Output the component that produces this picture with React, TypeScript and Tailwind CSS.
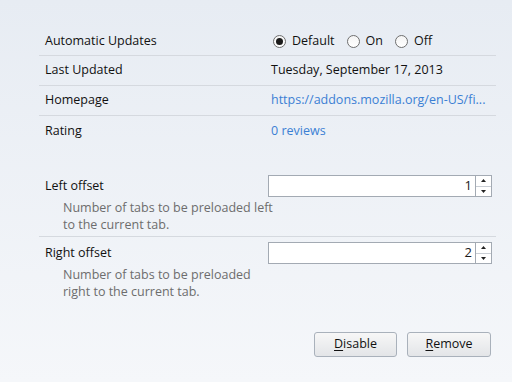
import { useState } from 'react';

function Radio({ label, checked, onClick }: { label: string; checked: boolean; onClick: () => void }) {
  return (
    <button onClick={onClick} className="flex items-center gap-[6px] mr-[12px]">
      <span className="w-[13px] h-[13px] rounded-full border border-[#6f6f6f] bg-gradient-to-b from-[#f4f4f4] to-[#ffffff] flex items-center justify-center">
        {checked && <span className="w-[7px] h-[7px] rounded-full bg-[#1b1b1b]" />}
      </span>
      <span>{label}</span>
    </button>
  );
}

function Spinner({ value }: { value: number }) {
  return (
    <div className="flex w-[224px] h-[22px] border border-[#a3aab3] bg-white">
      <div className="flex-1 flex items-center justify-end pr-[3px] text-[#1a1a1a] text-[13px]">{value}</div>
      <div className="w-[16px] flex flex-col border-l border-[#a3aab3]">
        <div className="flex-1 flex items-center justify-center border-b border-[#c9ced5]">
          <svg width="5" height="3" viewBox="0 0 5 3"><path d="M2.5 0L5 3H0z" fill="#222" /></svg>
        </div>
        <div className="flex-1 flex items-center justify-center">
          <svg width="5" height="3" viewBox="0 0 5 3"><path d="M0 0H5L2.5 3z" fill="#222" /></svg>
        </div>
      </div>
    </div>
  );
}

export default function App() {
  const [mode, setMode] = useState('default');

  return (
    <div className="w-[512px] h-[382px] bg-gradient-to-b from-[#e7ecf3] to-[#f5f7fa] pt-[26px] pl-[39px] pr-[16px] text-[12.5px] text-[#111] font-['Open_Sans',sans-serif] overflow-hidden">
      <div className="flex items-center h-[30px] border-b border-[#d5d9df] pt-[1px]">
        <div className="w-[232px] pl-[6px]">Automatic Updates</div>
        <div className="flex items-center pl-[2px]">
          <Radio label="Default" checked={mode === 'default'} onClick={() => setMode('default')} />
          <Radio label="On" checked={mode === 'on'} onClick={() => setMode('on')} />
          <Radio label="Off" checked={mode === 'off'} onClick={() => setMode('off')} />
        </div>
      </div>
      <div className="flex items-center h-[30px] border-b border-[#d5d9df]">
        <div className="w-[232px] pl-[6px]">Last Updated</div>
        <div>Tuesday, September 17, 2013</div>
      </div>
      <div className="flex items-center h-[30px] border-b border-[#d5d9df]">
        <div className="w-[232px] pl-[6px]">Homepage</div>
        <div className="text-[#3b7fd4] whitespace-nowrap overflow-hidden w-[222px]">https://addons.mozilla.org/en-US/fi...</div>
      </div>
      <div className="flex items-center h-[30px]">
        <div className="w-[232px] pl-[6px]">Rating</div>
        <div className="text-[#3b7fd4]">0 reviews</div>
      </div>

      <div className="mt-[29px] flex border-b border-[#d5d9df] pb-[3px]">
        <div className="w-[229px] pl-[6px]">
          <div className="h-[22px] flex items-center">Left offset</div>
          <div className="pl-[18px] pt-[2px] text-[#6d6d6d] leading-[17px] whitespace-nowrap">
            Number of tabs to be preloaded left<br />to the current tab.
          </div>
        </div>
        <Spinner value={1} />
      </div>
      <div className="flex pt-[5px]">
        <div className="w-[229px] pl-[6px]">
          <div className="h-[22px] flex items-center">Right offset</div>
          <div className="pl-[18px] pt-[2px] text-[#6d6d6d] leading-[17px] whitespace-nowrap">
            Number of tabs to be preloaded<br />right to the current tab.
          </div>
        </div>
        <Spinner value={2} />
      </div>

      <div className="flex justify-end gap-[10px] pr-[5px] mt-[32px]">
        <button className="w-[83px] h-[25px] rounded-[3px] border border-[#a9b1bb] bg-gradient-to-b from-[#f7f7f7] to-[#e3e5e8]">
          <span className="underline underline-offset-2">D</span>isable
        </button>
        <button className="w-[84px] h-[25px] rounded-[3px] border border-[#a9b1bb] bg-gradient-to-b from-[#f7f7f7] to-[#e3e5e8]">
          <span className="underline underline-offset-2">R</span>emove
        </button>
      </div>
    </div>
  );
}
